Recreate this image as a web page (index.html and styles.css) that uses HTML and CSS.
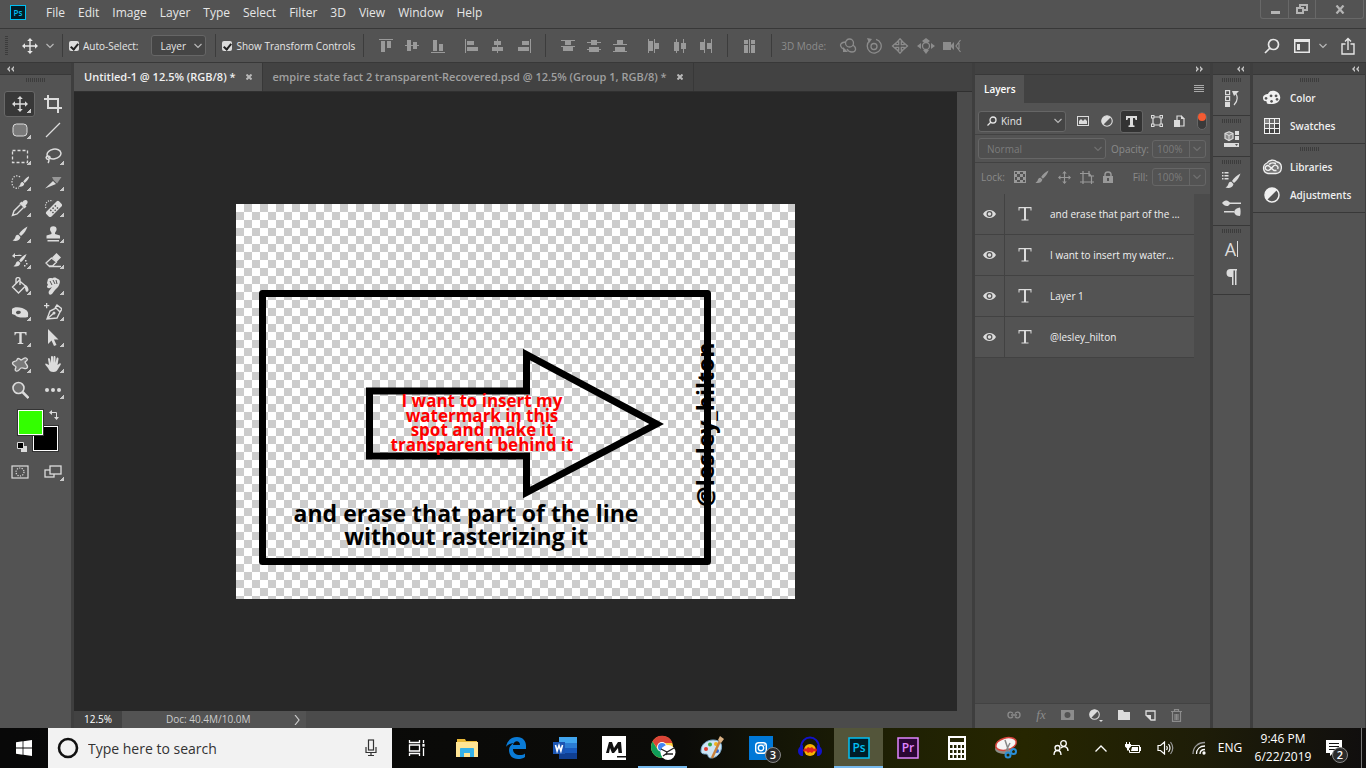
FILE: index.html
```html
<!DOCTYPE html>
<html lang="en">
<head>
<meta charset="utf-8">
<title>Untitled-1 @ 12.5% (RGB/8)</title>
<link rel="stylesheet" href="styles.css">
</head>
<body>
<svg class="defs" aria-hidden="true">
  <symbol id="chev" viewBox="0 0 8 6"><path d="M.5 1 4 4.500 7.500 1" fill="none" stroke="currentColor" stroke-width="1.200"/></symbol>
  <symbol id="left2" viewBox="0 0 8 6"><path d="M4 0 1 3l3 3V4L3 3l1-1zM8 0 5 3l3 3V4L7 3l1-1z"/></symbol>
  <symbol id="right2" viewBox="0 0 8 6"><path d="M0 0l3 3-3 3V4l1-1-1-1zM4 0l3 3-3 3V4l1-1-1-1z"/></symbol>
  <symbol id="move" viewBox="0 0 16 16"><path d="M8 0l2.800 3H8.700v4.300H13V5.200L16 8l-3 2.800V8.700H8.700V13h2.100L8 16l-2.800-3h2.100V8.700H3v2.100L0 8l3-2.800v2.100h4.300V3H5.200z"/></symbol>
  <symbol id="brush" viewBox="0 0 16 16"><path d="M15.500.5C12 2 9 5 7 8l2 2c3-2.500 5.500-6 6.500-9.500zM6.300 8.800C4 8.500 3.500 10.500 3 12c-.5 1.300-1.500 2-2.500 2.500 3 1 7.500.2 7.900-3.600z"/></symbol>
  <symbol id="tee" viewBox="0 0 14 14"><path d="M.5.500h13V4h-1c-.2-1.500-.7-2-2-2H8.300v9.500c0 .8.400 1 1.700 1v1H4v-1c1.300 0 1.700-.2 1.700-1V2H3.500c-1.300 0-1.800.5-2 2h-1z"/></symbol>
  <symbol id="teethin" viewBox="0 0 14 14"><path d="M.5 0h13v3.500h-1V1.200H8V12.500h2.500v1h-7v-1H6V1.200H1.500v2.300h-1z"/></symbol>
  <symbol id="half" viewBox="0 0 16 16"><circle cx="8" cy="8" r="7" fill="none" stroke="currentColor" stroke-width="1.500"/><path d="M13 3A7 7 0 0 0 3 13z"/></symbol>
  <symbol id="eye" viewBox="0 0 14 10"><path fill-rule="evenodd" d="M0 5C3-.8 11-.8 14 5c-3 5.800-11 5.800-14 0zm7-3.200a3.200 3.200 0 1 0 0 6.400 3.200 3.200 0 0 0 0-6.400z"/><circle cx="7" cy="5" r="1.900"/></symbol>
</svg>

<header class="menubar">
  <svg class="pslogo" viewBox="0 0 16 15"><rect x=".5" y=".5" width="15" height="14" fill="#001d28" stroke="#00c0f3"/><text x="8" y="11" text-anchor="middle">Ps</text></svg>
  <nav class="menus">
    <button>File</button><button>Edit</button><button>Image</button><button>Layer</button><button>Type</button><button>Select</button><button>Filter</button><button>3D</button><button>View</button><button>Window</button><button>Help</button>
  </nav>
  <div class="winbtns">
    <button aria-label="Minimize"><svg width="10" height="10"><path d="M1 7h9v3H1z"/></svg></button>
    <button aria-label="Restore"><svg width="12" height="10"><path fill="none" stroke="currentColor" stroke-width="2" d="M4 3V1h7v5H8M1 4h6v5H1z"/></svg></button>
    <button aria-label="Close"><svg width="10" height="9"><path fill="none" stroke="currentColor" stroke-width="2.200" d="M1.500.5l7 8M8.500.5l-7 8"/></svg></button>
  </div>
</header>

<div class="options">
  <span class="grip-v"></span>
  <button class="opt-tool" aria-label="Move tool preset"><svg width="16" height="16"><use href="#move"/></svg><svg width="8" height="6" class="soft"><use href="#chev"/></svg></button>
  <span class="sep"></span>
  <label class="check"><input type="checkbox" checked>Auto-Select:</label>
  <span class="select opt-select"><select aria-label="Auto-select target"><option>Layer</option></select><svg width="8" height="6"><use href="#chev"/></svg></span>
  <span class="sep"></span>
  <label class="check"><input type="checkbox" checked>Show Transform Controls</label>
  <span class="sep sep-wide"></span>
  <div class="align">
    <button aria-label="Align top edges"><svg viewBox="0 0 14 14"><path d="M0 0h14v1H0zM2 2h4v11H2zM8 2h4v7H8z"/></svg></button>
    <button aria-label="Align vertical centers"><svg viewBox="0 0 14 14"><path d="M0 6h14v1H0zM2 1h4v11H2zM8 3h4v7H8z"/></svg></button>
    <button aria-label="Align bottom edges"><svg viewBox="0 0 14 14"><path d="M0 13h14v1H0zM2 1h4v11H2zM8 5h4v7H8z"/></svg></button>
  </div>
  <div class="align">
    <button aria-label="Align left edges"><svg viewBox="0 0 14 14"><path d="M0 0h1v14H0zM2 2h7v4H2zM2 8h11v4H2z"/></svg></button>
    <button aria-label="Align horizontal centers"><svg viewBox="0 0 14 14"><path d="M6 0h1v14H6zM3 2h7v4H3zM1 8h11v4H1z"/></svg></button>
    <button aria-label="Align right edges"><svg viewBox="0 0 14 14"><path d="M13 0h1v14h-1zM5 2h7v4H5zM1 8h11v4H1z"/></svg></button>
  </div>
  <span class="sep"></span>
  <div class="align">
    <button aria-label="Distribute top edges"><svg viewBox="0 0 14 14"><path d="M0 1h14v1H0zM4 2h6v4H4zM0 7h14v1H0zM2 8h10v4H2z"/></svg></button>
    <button aria-label="Distribute vertical centers"><svg viewBox="0 0 14 14"><path d="M0 3h14v1H0zM4 1h6v5H4zM0 10h14v1H0zM2 8h10v5H2z"/></svg></button>
    <button aria-label="Distribute bottom edges"><svg viewBox="0 0 14 14"><path d="M0 5h14v1H0zM4 1h6v4H4zM0 12h14v1H0zM2 8h10v4H2z"/></svg></button>
  </div>
  <div class="align">
    <button aria-label="Distribute left edges"><svg viewBox="0 0 14 14"><path d="M1 0h1v14H1zM2 2h4v10H2zM7 0h1v14H7zM8 4h4v6H8z"/></svg></button>
    <button aria-label="Distribute horizontal centers"><svg viewBox="0 0 14 14"><path d="M3 0h1v14H3zM1 3h5v9H1zM10 0h1v14h-1zM8 4h5v6H8z"/></svg></button>
    <button aria-label="Distribute right edges"><svg viewBox="0 0 14 14"><path d="M5 0h1v14H5zM1 3h4v8H1zM12 0h1v14h-1zM8 4h4v6H8z"/></svg></button>
  </div>
  <span class="sep"></span>
  <div class="align single">
    <button aria-label="Auto-align layers"><svg viewBox="0 0 14 14"><path d="M1 1h4v4H1zM1 6h4v8H1zM6 0h1v14H6zM8 1h4v4H8zM8 6h4v8H8z"/></svg></button>
  </div>
  <span class="sep"></span>
  <div class="mode3d">
    <span>3D Mode:</span>
    <button aria-label="Orbit"><svg viewBox="0 0 18 16"><g fill="none" stroke="currentColor" stroke-width="1.300"><circle cx="10.500" cy="5" r="4"/><path d="M7 4C2 4 0 7 3 10l3 2M14 7c4 3 3 7-1 7-2 0-4-1-5-3"/></g><path d="M4 14V9l5 5z"/></svg></button>
    <button aria-label="Roll"><svg viewBox="0 0 18 16"><g fill="none" stroke="currentColor" stroke-width="1.300"><circle cx="9" cy="8.500" r="3"/><path d="M5 2.500a7 7 0 1 0 6-1.200"/></g><path d="M2 0l5 1-3 4z"/></svg></button>
    <button aria-label="Pan"><svg viewBox="0 0 18 16"><path fill="none" stroke="currentColor" stroke-width="1.300" d="M9 .8 12 4H10.300v2.700H13V5l3.500 3-3.500 3V9.300h-2.700V12H12l-3 3.200L6 12h1.700V9.300H5V11L1.500 8 5 5v1.700h2.700V4H6z"/></svg></button>
    <button aria-label="Slide"><svg viewBox="0 0 18 16"><circle cx="9" cy="8" r="3.500" fill="none" stroke="currentColor" stroke-width="1.300"/><path d="M5 3l4-3 4 3-2 1.500H7zM4 5v6L0 8zM14 5v6l4-3zM6 12h6l-3 4z"/></svg></button>
    <button aria-label="Camera"><svg viewBox="0 0 18 16"><path d="M0 4h8v3l3-3v8L8 9v3H0z"/><path fill="none" stroke="currentColor" stroke-width="1.200" d="M17.500 2 13 8l4.500 6M16 5v6"/></svg></button>
  </div>
  <div class="opt-right">
    <button aria-label="Search"><svg width="16" height="16" fill="none" stroke="currentColor" stroke-width="1.700"><circle cx="9.500" cy="6.500" r="5"/><path d="M6 10 1 15"/></svg></button>
    <button aria-label="Workspace"><svg width="16" height="14"><path fill-rule="evenodd" d="M0 0h16v14H0zM1.500 3v9.500h13V3z"/><path d="M3 5h3v6H3z"/></svg><svg width="8" height="6" class="soft"><use href="#chev"/></svg></button>
    <button aria-label="Share"><svg width="14" height="18" fill="none" stroke="currentColor" stroke-width="1.400"><path d="M4.500 7H1v10h12V7H9.500M7 13V1.500M4 4.500l3-3 3 3"/></svg></button>
  </div>
</div>

<main class="workspace">
  <aside class="tools">
    <div class="strip strip-left"><svg width="8" height="6"><use href="#left2"/></svg></div>
    <span class="grip"></span>
    <div class="toolgrid">
      <button class="on" aria-label="Move"><svg viewBox="0 0 18 18"><use href="#move" x="1" y="1" width="16" height="16"/></svg></button>
      <button class="plain" aria-label="Crop"><svg viewBox="0 0 18 18"><path fill="none" stroke="currentColor" stroke-width="2" d="M0 4h14v11M4 0v13h14M14 15v3"/></svg></button>
      <button aria-label="Rounded rectangle"><svg viewBox="0 0 18 18"><rect x="2" y="3" width="14" height="12" rx="3.500" fill="#7a7a7a" stroke="currentColor"/></svg></button>
      <button class="plain" aria-label="Line"><svg viewBox="0 0 18 18"><path fill="none" stroke="currentColor" stroke-width="1.200" d="M2 16 16 2"/></svg></button>
      <button aria-label="Marquee"><svg viewBox="0 0 18 18"><rect x="1.500" y="3.500" width="15" height="12" fill="none" stroke="currentColor" stroke-width="1.300" stroke-dasharray="3 2"/></svg></button>
      <button aria-label="Lasso"><svg viewBox="0 0 18 18"><g fill="none" stroke="currentColor" stroke-width="1.500"><ellipse cx="10" cy="7" rx="7" ry="4.800" transform="rotate(-10 10 7)"/><path d="M3 9c-2 2 0 4 2 3s1-3-1-3M5 12c0 2 0 3-1 4"/></g></svg></button>
      <button aria-label="Quick selection"><svg viewBox="0 0 18 18"><path fill="none" stroke="currentColor" stroke-width="1.300" stroke-dasharray="1.300 1.500" d="M9 4C5 1 1 4 1 9s3 7 7 6"/><use href="#brush" x="7" y="2" width="12" height="13"/></svg></button>
      <button aria-label="Slice"><svg viewBox="0 0 18 18"><path d="M1 15.500 9 8l3 3z"/><path d="M8 4h9.500L13 10.500 9.500 7z" opacity=".5"/></svg></button>
      <button aria-label="Eyedropper"><svg viewBox="0 0 18 18"><path d="M11 3.500c2-3 4-3 5-2s1 3-1.500 5l1 1-2 2-5-5 2-2z"/><path fill="none" stroke="currentColor" stroke-width="1.400" d="M9.500 5.500 3 12l-1.500 4.500L6 15l6.500-6.500"/></svg></button>
      <button aria-label="Healing brush"><svg viewBox="0 0 18 18"><path fill="none" stroke="currentColor" stroke-width="1.200" stroke-dasharray="1.200 1.300" d="M2 9C0 5 4 0 9 2"/><g transform="rotate(-45 10 10)"><rect x="1" y="6.500" width="18" height="7" rx="2"/><path fill="#535353" d="M6 8h1.500v1.500H6zm3.200 0h1.500v1.500H9.200zm3.200 0h1.500v1.500h-1.500zM6 11h1.500v1.500H6zm3.200 0h1.500v1.500H9.200zm3.200 0h1.500v1.500h-1.500z"/></g></svg></button>
      <button aria-label="Brush"><svg viewBox="0 0 18 18"><use href="#brush" x="1" y="1" width="16" height="16"/></svg></button>
      <button aria-label="Clone stamp"><svg viewBox="0 0 18 18"><path d="M7.500 9C8 7 6 6.500 6 4.500a3.300 3.300 0 0 1 6.600 0c0 2-2 2.500-1.600 4.500l5 1.500v3H2.500v-3zM3.500 15h11.500v1.500H3.500z"/></svg></button>
      <button aria-label="History brush"><svg viewBox="0 0 18 18"><use href="#brush" x="2" y="2" width="14" height="15"/><path d="M1 5l3-3v2c3 0 6-1 7 1H4v2zM14 9h1.500v1.500H14zm1 3h1.500v1.500H15zm-2 2h1.500v1.500H13z"/></svg></button>
      <button aria-label="Eraser"><svg viewBox="0 0 18 18"><path d="M8 6.500 12.500 2l4.500 4.500L12.500 11z"/><path fill="none" stroke="currentColor" stroke-width="1.300" d="M7.500 7 2 12l3 3h3.500l4-4zM5 15.500h12"/></svg></button>
      <button aria-label="Paint bucket"><svg viewBox="0 0 18 18"><g fill="none" stroke="currentColor" stroke-width="1.400"><path d="M8 3.500 1.500 10l6 6 7-7zM5 6V2.500C5 0 9 0 9 2.500V8"/></g><path d="M13 8c3 0 4 2 4.500 4.500 0 3-3 3-3 .5z"/></svg></button>
      <button aria-label="Smudge"><svg viewBox="0 0 18 18"><path d="M4 2c2-2 4 0 5-1 2-1 3 0 5 1 3 1 2 5 0 8l-3 3-3 4c-3 2-4-1-3-3l3-4-2 1c-3 1-4-2-2-3L3 6z"/><path stroke="#535353" d="M8 8 6 4m5 3L9 3m4 4-1-4"/></svg></button>
      <button aria-label="Sponge"><svg viewBox="0 0 18 18"><path fill-rule="evenodd" d="M1 6c2-3 11-2 14 1 3 2 2 5 2 7-4 1-11 1-13-2L1 11zm8 2C5 7 4 10 6 11c3 1 5-2 3-3z"/></svg></button>
      <button aria-label="Pen"><svg viewBox="0 0 18 18"><path fill="none" stroke="currentColor" stroke-width="1.400" d="M3 16 6 8l6-3 4 4-3 6zl7-6M11 5l2-3 5 4-2 3"/><circle cx="10" cy="10" r="1.500"/><path d="M0 2h2V0h1.300v2h2v1.300h-2v2H2v-2H0z"/></svg></button>
      <button aria-label="Type"><svg viewBox="0 0 18 18"><use href="#tee" x="3" y="2" width="13" height="14"/></svg></button>
      <button aria-label="Path selection"><svg viewBox="0 0 18 18"><path d="M4 0v15l3.500-3.500L10 17l2.500-1L10 10.500h4.500z"/></svg></button>
      <button aria-label="Custom shape"><svg viewBox="0 0 18 18"><path fill="#7a7a7a" stroke="currentColor" stroke-width="1.300" d="M6 5c0-2 2-2 4 0 2 0 3-3 5-2s2 2-1 4c1 3 4 4 2 6s-3-1-6 0c-2 1-2 4-5 3-2-1 0-3 0-4S1 10 1.500 8 5 7 6 5z"/></svg></button>
      <button aria-label="Hand"><svg viewBox="0 0 18 18"><path d="M5 10 4 4c0-1.500 1.500-1.500 2 0l1 4V2c0-1.500 2-1.500 2 0v6l.5-6c0-1.500 2-1.500 2 0v6l1-4.500c.5-1.500 2-1 2 .5l-1 6 2-1.500c1-.7 2 .3 1 1.500L14 14c-1 2-2 3-4.500 3-3 0-4-1-5.500-4L1.500 10c-.7-1.500.5-2 1.500-1z"/></svg></button>
      <button class="plain" aria-label="Zoom"><svg viewBox="0 0 18 18"><circle cx="7.500" cy="7" r="5.500" fill="#6e6e6e" stroke="currentColor" stroke-width="1.600"/><path stroke="currentColor" stroke-width="2.500" d="m11.500 11 6 6"/></svg></button>
      <button aria-label="Edit toolbar"><svg viewBox="0 0 18 18"><circle cx="3" cy="9" r="2"/><circle cx="9" cy="9" r="2"/><circle cx="15" cy="9" r="2"/></svg></button>
    </div>
    <div class="colors">
      <button class="bgc" aria-label="Background color"></button>
      <button class="fgc" aria-label="Foreground color"></button>
      <button class="swap" aria-label="Swap colors"><svg width="10" height="10"><path fill="none" stroke="currentColor" d="M2 2.500h5.500V8"/><path d="M3 0v5L0 2.500zM5 7h5l-2.500 3z"/></svg></button>
      <button class="reset" aria-label="Default colors"><svg width="10" height="10"><path d="M4 4h6v6H4z"/><path fill="#000" stroke="#ddd" d="M.5.500h6v6h-6z"/></svg></button>
    </div>
    <div class="toolgrid modes">
      <button class="plain" aria-label="Quick mask"><svg viewBox="0 0 18 18"><g fill="none" stroke="currentColor" stroke-width="1.200"><rect x="1" y="3" width="16" height="12"/><circle cx="9" cy="9" r="4" stroke-dasharray="1.200 1.300"/></g></svg></button>
      <button aria-label="Screen mode"><svg viewBox="0 0 18 18"><g fill="#535353" stroke="currentColor" stroke-width="1.300"><rect x="1" y="7" width="9" height="7"/><rect x="6" y="3" width="11" height="8"/></g></svg></button>
    </div>
  </aside>

  <section class="doc">
    <div class="tabs">
      <div class="tab on"><span>Untitled-1 @ 12.5% (RGB/8) *</span><button aria-label="Close tab"><svg width="6" height="6"><path stroke="currentColor" stroke-width="2" d="M.5.500l5 5M5.500.5l-5 5"/></svg></button></div>
      <div class="tab"><span>empire state fact 2 transparent-Recovered.psd @ 12.5% (Group 1, RGB/8) *</span><button aria-label="Close tab"><svg width="6" height="6"><path stroke="currentColor" stroke-width="2" d="M.5.500l5 5M5.500.5l-5 5"/></svg></button></div>
    </div>
    <div class="stage">
      <div class="pasteboard">
        <svg class="art" viewBox="0 0 559 395" width="559" height="395">
          <defs><pattern id="chk" width="16" height="16" patternUnits="userSpaceOnUse"><path fill="#fff" d="M0 0h16v16H0z"/><path fill="#ccc" d="M8 0h8v8H8zM0 8h8v8H0z"/></pattern></defs>
          <rect width="559" height="395" fill="url(#chk)"/>
          <rect x="26.500" y="89.500" width="445" height="268" fill="none" stroke="#000" stroke-width="7" stroke-linejoin="round"/>
          <path d="M133.500 187h157v-36.500l130 69.500-130 68.500V252h-157z" fill="none" stroke="#000" stroke-width="7"/>
          <g class="red" text-anchor="middle">
            <text x="246" y="203">I want to insert my</text>
            <text x="246" y="218">watermark in this</text>
            <text x="246" y="232">spot and make it</text>
            <text x="246" y="247">transparent behind it</text>
          </g>
          <g class="black" text-anchor="middle">
            <text x="230" y="318">and erase that part of the line</text>
            <text x="230" y="341">without rasterizing it</text>
          </g>
          <text class="mark" transform="translate(478 303) rotate(-90)">@lesley_hilton</text>
        </svg>
      </div>
      <div class="scroll"></div>
    </div>
    <div class="status"><span class="zoom">12.5%</span><span class="size"><span>Doc: 40.4M/10.0M</span><svg width="6" height="10"><path fill="none" stroke="currentColor" stroke-width="1.200" d="m1 0 4 5-4 5"/></svg></span></div>
  </section>

  <aside class="layers">
    <div class="strip"><svg width="8" height="6"><use href="#right2"/></svg></div>
    <div class="paneltabs"><h2>Layers</h2><button aria-label="Panel menu"><svg width="10" height="8"><path d="M0 0h10v1H0zm0 2h10v1H0zm0 2h10v1H0zm0 2h10v1H0z"/></svg></button></div>
    <div class="filter">
      <span class="select kind"><svg class="mag" width="10" height="10" fill="none" stroke="currentColor" stroke-width="1.300"><circle cx="6" cy="4" r="3"/><path d="M4 6 .5 9.500"/></svg><select aria-label="Filter kind"><option>Kind</option></select><svg width="8" height="6"><use href="#chev"/></svg></span>
      <div class="filters">
        <button aria-label="Pixel layers"><svg width="12" height="10"><path fill-rule="evenodd" d="M0 0h12v10H0zM1 1v8h10V1z"/><path d="M2 8V5l2-2 2 2 2-2 2 2v3z"/></svg></button>
        <button aria-label="Adjustment layers"><svg width="12" height="12"><use href="#half"/></svg></button>
        <button class="on" aria-label="Type layers"><svg width="11" height="11"><path d="M0 0h11v4h-1.500C9.300 2.500 9 2 8 2H7v6c0 1 .3 1.500 1.500 1.500V11h-6V9.500C3.700 9.500 4 9 4 8V2H3c-1 0-1.300.5-1.500 2H0z"/></svg></button>
        <button aria-label="Shape layers"><svg width="12" height="12"><path fill="none" stroke="currentColor" stroke-width="1.200" d="M2 2h8v8H2z"/><path d="M0 0h3.500v3.500H0zm8.500 0H12v3.500H8.500zM0 8.500h3.500V12H0zm8.500 0H12V12H8.500z"/><path fill="#535353" d="M1 1h1.500v1.500H1zm8.500 0H11v1.500H9.500zM1 9.500h1.500V11H1zm8.500 0H11V11H9.500z"/></svg></button>
        <button aria-label="Smart objects"><svg width="11" height="12"><path fill="none" stroke="currentColor" stroke-width="1.200" d="M3 5V1h4l3 3v7H6"/><path d="M0 5h6v7H0zM7 0v4h4z"/></svg></button>
        <button class="toggle" aria-label="Layer filtering on or off"><i></i></button>
      </div>
    </div>
    <div class="blend">
      <span class="select"><select aria-label="Blend mode" disabled><option>Normal</option></select><svg width="8" height="6"><use href="#chev"/></svg></span>
      <label for="opacity">Opacity:</label><span class="num"><input id="opacity" value="100%" disabled><svg width="8" height="6"><use href="#chev"/></svg></span>
    </div>
    <div class="lock">
      <span>Lock:</span>
      <button aria-label="Lock transparent pixels"><svg width="12" height="12"><path d="M0 0h12v1H0zM0 11h12v1H0zM0 1h1v10H0zM11 1h1v10h-1zM3 1h3v2H3zM9 1h2v2H9zM1 3h2v3H1zM6 3h3v3H6zM3 6h3v3H3zM9 6h2v3H9zM1 9h2v2H1zM6 9h3v2H6z"/></svg></button>
      <button aria-label="Lock image pixels"><svg width="14" height="14"><use href="#brush"/></svg></button>
      <button aria-label="Lock position"><svg width="13" height="13"><use href="#move"/></svg></button>
      <button aria-label="Lock artboard nesting"><svg width="14" height="13"><path fill="none" stroke="currentColor" stroke-width="1.200" d="M3 0v13M0 2.500h9M11.500 5v8M0 11h14M9 2.500l2.500 3M9 0v5h5"/></svg></button>
      <button aria-label="Lock all"><svg width="10" height="12"><path fill-rule="evenodd" d="M0 5h10v7H0zm4 2v3h2V7z"/><path fill="none" stroke="currentColor" stroke-width="1.500" d="M2 6V3.500C2 0 8 0 8 3.500V6"/></svg></button>
      <label for="fill">Fill:</label><span class="num"><input id="fill" value="100%" disabled><svg width="8" height="6"><use href="#chev"/></svg></span>
    </div>
    <div class="listwrap">
      <ul class="list">
        <li><button class="vis" aria-label="Toggle visibility"><svg width="13" height="10"><use href="#eye"/></svg></button><svg class="thumb" width="14" height="14"><use href="#teethin"/></svg><span>and erase that part of the ...</span></li>
        <li><button class="vis" aria-label="Toggle visibility"><svg width="13" height="10"><use href="#eye"/></svg></button><svg class="thumb" width="14" height="14"><use href="#teethin"/></svg><span>I want to insert my water...</span></li>
        <li><button class="vis" aria-label="Toggle visibility"><svg width="13" height="10"><use href="#eye"/></svg></button><svg class="thumb" width="14" height="14"><use href="#teethin"/></svg><span>Layer 1</span></li>
        <li><button class="vis" aria-label="Toggle visibility"><svg width="13" height="10"><use href="#eye"/></svg></button><svg class="thumb" width="14" height="14"><use href="#teethin"/></svg><span>@lesley_hilton</span></li>
      </ul>
    </div>
    <div class="foot">
      <button class="dim" aria-label="Link layers"><svg width="14" height="8" fill="none" stroke="currentColor" stroke-width="1.300"><path d="M6 2.500C4.500.5 1 .5 1 4s3.500 3.500 5 1.500M8 2.500C9.500.5 13 .5 13 4S9.500 7.500 8 5.500M4 4h6"/></svg></button>
      <button class="dim fx" aria-label="Layer style">fx</button>
      <button class="dim" aria-label="Add mask"><svg width="13" height="10"><path fill-rule="evenodd" d="M0 0h13v10H0zm6.500 2a3 3 0 1 0 0 6 3 3 0 0 0 0-6z"/></svg></button>
      <button aria-label="New adjustment layer"><svg width="14" height="14"><use href="#half" width="11" height="11" y="1"/><path d="M10 12h4l-2 2z"/></svg></button>
      <button aria-label="New group"><svg width="12" height="10"><path d="M0 0h5l1 2h6v8H0z"/></svg></button>
      <button aria-label="New layer"><svg width="11" height="11"><path fill="none" stroke="currentColor" stroke-width="1.300" d="M1 5V1h9v9H6"/><path d="M0 5h6v6z"/></svg></button>
      <button class="dim" aria-label="Delete layer"><svg width="11" height="13" fill="none" stroke="currentColor" stroke-width="1.200"><path d="M0 2.500h11M3.500 2V.6h4V2M1.500 3v9.400h8V3M4 5v6m1.500-6v6M7 5v6"/></svg></button>
    </div>
  </aside>

  <aside class="dock narrow">
    <div class="strip"><svg width="8" height="6"><use href="#left2"/></svg></div>
    <div class="group"><span class="grip"></span>
      <button aria-label="History"><svg width="16" height="18"><path fill="none" stroke="currentColor" stroke-width="1.200" d="M1.600 1.600h4v4h-4zm0 6h4v4h-4zM10 16c4-4 4-8 1.500-12"/><path d="M1 13h5v5H1zM8 2h7l-5 5z"/></svg></button></div>
    <div class="group"><span class="grip"></span>
      <button aria-label="Properties"><svg width="16" height="16"><path fill="#8a8a8a" stroke="currentColor" stroke-width="1.200" d="M5 .8 9 2.500v5L5 9.500 1 7.500v-5z"/><path fill="none" stroke="currentColor" d="m1 2.500 4 2 4-2M5 4.500v5"/><path d="M11 0h4v4h-4zm0 5h4v4h-4zM0 12h15v4H0z"/><path fill="#535353" d="M11 13h3l-1.500 2z"/></svg></button></div>
    <div class="group"><span class="grip"></span>
      <button aria-label="Brush presets"><svg width="20" height="18"><path d="M0 1h1.500v1.500H0zm2.500 0h4v1.500h-4zM0 4h1.500v1.500H0zm2.500 0h4v1.500h-4zM0 7h1.500v1.500H0zm2.500 0h4v1.500h-4z"/><use href="#brush" x="3" y="2" width="16" height="16"/></svg></button>
      <button aria-label="Brush settings"><svg width="20" height="16"><path d="M0 3c2-2 3-3 6-2l2 1.500h11v1.500H8L6 6C3 6.500 2 5 0 3zM2 11h10v1.500H2zM12 12c1-3 3-4 6-4.500.7 2 1 6 0 8.500-3 0-5-1-6-4z"/></svg></button></div>
    <div class="group"><span class="grip"></span>
      <button class="char" aria-label="Character"><span>A</span><i></i></button>
      <button aria-label="Paragraph"><svg width="12" height="16"><path d="M11 0H4.500a4 4 0 0 0 0 8H6v8h1.500V1.500H9V16h1.500V1.500h.5z"/></svg></button></div>
  </aside>

  <aside class="dock wide">
    <div class="strip"><svg width="8" height="6"><use href="#left2"/></svg></div>
    <div class="group"><span class="grip"></span>
      <button><svg width="20" height="16"><path fill-rule="evenodd" d="M1 8c0-3 3-4 5-4 1-3 4-4 7-3 4 1 6 5 5 8s-4 5-9 5c-4 0-5-1-4-2 0-1-4 0-4-4zm3-1a1.400 1.400 0 1 0 .1 0zm5-2.500a1.400 1.400 0 1 0 .1 0zm5 0a1.400 1.400 0 1 0 .1 0zM15 8a1.400 1.400 0 1 0 .1 0zm-5.500 2a1.400 1.400 0 1 0 .1 0z"/></svg>Color</button>
      <button><svg width="20" height="16"><path d="M2 0h16v16H2z"/><path fill="#888" d="M3 1h4v4H3z"/><path fill="#666" d="M8 1h4v4H8zM13 1h4v4h-4zM3 6h4v4H3zm5 0h4v4H8z"/><path fill="#444" d="M13 6h4v4h-4zM3 11h4v4H3zm5 0h4v4H8zm5 0h4v4h-4z"/></svg>Swatches</button></div>
    <div class="group"><span class="grip"></span>
      <button><svg width="20" height="16"><path fill="#777" stroke="currentColor" stroke-width="1.300" d="M6 14.500A5.500 5.500 0 0 1 5 4c2-3 7-4 10-1 6 1 6 11-1 11.500z"/><path fill="none" stroke="currentColor" stroke-width="1.400" d="M14.500 11.500H12L7.500 7.500C5 5 2 8.500 4 10.500c2 2 4 .5 7-3s6 .5 4.500 2.500M7 5.500c3-3 6-1 7-1"/></svg>Libraries</button>
      <button><svg width="20" height="16"><use href="#half" x="2" width="16" height="16"/></svg>Adjustments</button></div>
  </aside>
</main>

<footer class="taskbar">
  <button class="start" aria-label="Start"><svg width="16" height="16"><path fill="#fff" d="M0 2.200 6.600 1.300v6.300H0zM7.400 1.200 16 0v7.600H7.400zM0 8.400h6.600v6.300L0 13.800zM7.400 8.400H16V16l-8.600-1.200z"/></svg></button>
  <label class="search"><svg width="22" height="22"><circle cx="11" cy="11" r="9" fill="none" stroke="#111" stroke-width="2.600"/></svg><input type="text" placeholder="Type here to search" aria-label="Type here to search"><svg width="12" height="18" fill="none" stroke="#333" stroke-width="1.200"><rect x="3.500" y="1" width="5" height="10"/><path d="M1 8v5.500h10V8M6 13.500v3M3 16.500h6"/></svg></label>
  <button class="taskview" aria-label="Task view"><svg width="18" height="16" fill="none" stroke="#fff" stroke-width="1.300"><path d="M1.500 0v2.500h10V0M1.500 5h10v6h-10zM1.500 16v-2.500h10V16M15.500 0v3M15.500 8v8"/><path fill="#fff" d="M15 4.500h1v1.500h-1z"/></svg></button>
  <div class="apps">
    <button aria-label="File Explorer"><svg width="22" height="20"><path fill="#e8b838" d="M1 1h8l1 2h11v3H1z"/><path fill="#ffe594" d="M0 4h22v15H0z"/><path fill="#34b1e8" d="M4 19v-8c0-1 .5-1 1-1h12c.5 0 1 0 1 1v8h-4v-4H8v4z"/></svg></button>
    <button aria-label="Edge"><svg width="22" height="22"><path fill="#0a7bd6" d="M1 10C2 3 7 0 12 0c6 0 9 4 9 9v3H8c0 4 3 6 7 6 2 0 4-.5 5-1.500V20c-2 1.500-4 2-7 2-6 0-9-4-9-9 0-3 2-5.500 5-7-4 .5-6.500 2-8 4zm7-2h7c0-5-6-5-7 0z"/></svg></button>
    <button aria-label="Word"><svg width="24" height="22"><path fill="#2b7cd3" d="M6 0h18v22H6z"/><path fill="#41a5ee" d="M6 0h18v6H6z"/><path fill="#185abd" d="M6 11h18v6H6z"/><path fill="#103f91" d="M6 16h18v6H6z"/><path fill="#1c56b4" d="M0 5h12v12H0z"/><path fill="none" stroke="#fff" stroke-width="1.600" d="m2.500 8 1.600 6L6 8.500 7.900 14l1.600-6"/></svg></button>
    <button aria-label="M app"><svg width="24" height="24"><path fill="#fff" d="M0 0h24v24H0z"/><path fill="#111" d="M4 17 7 6h3l2 6 4-6h3l1 11h-3.500l-.5-5-4 5h-2l-2-5-1 5zM15 20h9v1.500h-9z"/></svg></button>
    <button class="run" aria-label="Chrome"><svg width="26" height="26"><circle cx="12" cy="12" r="11" fill="#ffcd40"/><path fill="#db4437" d="M2.500 6.500a11 11 0 0 1 20 1.500H12L8 14z"/><path fill="#0f9d58" d="M2.500 6.500A11 11 0 0 0 12 23l4-8H8z"/><circle cx="12" cy="12" r="5" fill="#fff"/><circle cx="12" cy="12" r="4" fill="#4285f4"/><circle cx="18" cy="17.500" r="7.500" fill="#fff"/><path fill="none" stroke="#222" stroke-width="1.300" d="m11 14 6 3 7-4M13 21l3-2h7M17 17l-1 3"/></svg></button>
    <button aria-label="Paint"><svg width="24" height="24"><path fill="#cde5f5" stroke="#79a9cc" d="M1 15C1 8 7 4 13 4c7 0 10 4 8 10-1 4-5 8-10 8-4 0-2-4-5-4-2 0-5 0-5-3z"/><circle cx="6" cy="13" r="2" fill="#e23b2e"/><circle cx="10" cy="8.500" r="2" fill="#39a845"/><circle cx="16" cy="8" r="2" fill="#f2b31b"/><circle cx="17" cy="15" r="2" fill="#3565c8"/><path stroke="#c8813c" stroke-width="2.500" d="M12 22 20 5"/><path fill="#dbb285" d="m18 4 2-4 4 3-3 4z"/></svg></button>
    <button class="insta" aria-label="Instagram"><svg width="24" height="24"><path fill="#0078d7" d="M0 0h24v24H0z"/><g fill="none" stroke="#fff" stroke-width="1.400"><rect x="6.700" y="6.700" width="10.600" height="10.600" rx="3"/><circle cx="12" cy="12" r="2.700"/></g><circle cx="15.200" cy="9" r=".8" fill="#fff"/></svg><b class="badge">3</b></button>
    <button aria-label="Audacity"><svg width="24" height="24"><ellipse cx="12" cy="14" rx="6" ry="6" fill="#f5b400"/><path fill="#e02020" d="M5 14l2-2 1 1 2-2 2 1 2-1 2 2 2-1 1 2-1 2-2-1-2 2-2-1-2 1-2-2-2 1z"/><path fill="none" stroke="#1212c8" stroke-width="2" d="M3 12C3-2 21-2 21 12"/><path fill="#1212c8" d="M5 9v11H3c-4-2-4-8 0-10zM19 9v11h2c4-2 4-8 0-10z"/></svg></button>
    <button class="run active" aria-label="Photoshop"><svg class="ps" width="22" height="22"><rect x="1" y="1" width="20" height="20" fill="#001d28" stroke="#00c0f3" stroke-width="1.500"/><text x="11" y="15" text-anchor="middle">Ps</text></svg></button>
    <button aria-label="Premiere"><svg class="pr" width="22" height="22"><rect x="1" y="1" width="20" height="20" fill="#2a0634" stroke="#e085ff" stroke-width="1.500"/><text x="11" y="15" text-anchor="middle">Pr</text></svg></button>
    <button aria-label="Calculator"><svg width="18" height="24"><path fill="#fff" fill-rule="evenodd" d="M0 0h18v24H0zm2 2v4h14V2zm0 7v3h2.500V9zm4 0v3h2.500V9zm4 0v3h2.500V9zm4 0v3h2V9zM2 14v3h2.500v-3zm4 0v3h2.500v-3zm4 0v3h2.500v-3zm4 0v3h2v-3zM2 19v3h2.500v-3zm4 0v3h2.500v-3zm4 0v3h2.500v-3zm4 0v3h2v-3z"/></svg></button>
    <button aria-label="Snipping Tool"><svg width="24" height="24"><ellipse cx="10" cy="13" rx="9" ry="5" fill="#8d8d88"/><ellipse cx="12" cy="8" rx="10.500" ry="6" transform="rotate(-15 12 8)" fill="#f5f5f5" stroke="#d8453e" stroke-width="1.500"/><path fill="none" stroke="#888" stroke-width="1.500" d="m11 4 4 12M16 7l-4 8"/><g fill="none" stroke="#2a8fd8" stroke-width="2"><circle cx="14" cy="19" r="2.500"/><circle cx="19.500" cy="15.500" r="2.500"/></g></svg></button>
  </div>
  <div class="tray">
    <button class="people" aria-label="People"><svg width="16" height="16" fill="none" stroke="#fff" stroke-width="1.300"><circle cx="10.500" cy="3.500" r="2.800"/><circle cx="4.500" cy="8" r="2.500"/><path d="M1 15c0-6 7-6 7 0M8 8c3-3 7-1 7 3"/></svg></button>
    <button class="up" aria-label="Hidden icons"><svg width="12" height="7"><path fill="none" stroke="#fff" stroke-width="1.300" d="m.5 6.500 5.500-5.500 5.500 5.500"/></svg></button>
    <button class="bat" aria-label="Battery"><svg width="16" height="12"><path fill="none" stroke="#fff" d="M5 3.500h9.500v7h-10V8"/><path fill="#fff" d="M7 5h6v4H6zM15 5h1v4h-1zM1 0h1v2H1zm3 0h1v2H4zM0 2h6v2.500L4 6.500v2H2v-2L0 4.500z"/></svg></button>
    <button class="vol" aria-label="Volume"><svg width="17" height="14" fill="none" stroke="#fff" stroke-width="1.200"><path d="M1 4.500h2.500l4-3.500v12l-4-3.500H1zM9.500 5q1.500 2 0 4M11.500 3q3 4 0 8"/><path stroke="#999" d="M13.500 1q4.500 6 0 12"/></svg></button>
    <button class="wifi" aria-label="Wi-Fi"><svg width="14" height="14" fill="none" stroke="#fff" stroke-width="1.300"><path stroke="#999" d="M1 13C1 6 6 1.500 13 1.500"/><path d="M4.500 13C4.500 8 8 5 13 5M8 13c0-3 2-4.500 5-4.500"/><circle cx="12" cy="12" r="1" fill="#fff"/></svg></button>
    <button class="lang">ENG</button>
    <button class="clock"><span>9:46 PM</span><span>6/22/2019</span></button>
    <button class="notif" aria-label="Notifications"><svg width="16" height="16"><path fill="#fff" d="M0 0h16v13H7l-3 3v-3H0z"/><path stroke="#111" d="M3 3.500h10M3 6.500h10M3 9.500h7"/></svg><b class="badge">2</b></button>
    <button class="desk" aria-label="Show desktop"></button>
  </div>
</footer>
</body>
</html>
```
FILE: styles.css
```css
* { box-sizing: border-box; }
body {
  margin: 0;
  min-height: 100vh;
  display: flex;
  flex-direction: column;
  background: #535353;
  color: #e6e6e6;
  font: 10px/14px "Open Sans", "Noto Sans", sans-serif;
}
button, input, select {
  font: inherit;
  color: inherit;
  background: none;
  border: 0;
  margin: 0;
  padding: 0;
}
button { display: flex; align-items: center; justify-content: center; }
svg { fill: currentColor; flex: none; display: block; }
svg[fill="none"] { fill: none; }
.defs { display: none; }
.soft { color: #b8b8b8; }

/* menu bar */
.menubar { display: flex; height: 29px; border-bottom: 1px solid #383838; padding-left: 10px; }
.pslogo { width: 16px; height: 15px; margin-top: 5px; }
.pslogo text { font-size: 8px; font-weight: 600; fill: #00c0f3; }
.menus { display: flex; gap: 13px; margin-left: 20px; height: 26px; font-size: 12px; }
.winbtns {
  margin-left: auto;
  margin-right: 2px;
  display: flex;
  height: 19px;
  border: 1px solid #686868;
  border-top: 0;
  border-radius: 0 0 3px 3px;
  color: #b4b4b4;
}
.winbtns button { width: 27px; }
.winbtns button + button { border-left: 1px solid #686868; }
.winbtns button:last-child { width: 48px; }

/* tool options */
.options { display: flex; align-items: center; height: 34px; padding: 0 11px 0 5px; border-bottom: 1px solid #383838; }
.grip-v { width: 3px; height: 20px; background: repeating-linear-gradient(#3c3c3c 0 1px, #535353 1px 2px); }
.opt-tool { gap: 8px; margin: 0 8px 0 14px; }
.sep { width: 1px; height: 23px; background: #3c3c3c; }
.sep-wide { margin-left: 8px; }
.check { display: flex; align-items: center; gap: 4px; margin-left: 6px; white-space: nowrap; }
.check input {
  appearance: none;
  width: 10px;
  height: 10px;
  border-radius: 2px;
  background: #dcdcdc;
  display: grid;
  place-items: center;
}
.check input:checked::after {
  content: "";
  width: 3px;
  height: 6px;
  border: solid #222;
  border-width: 0 2px 2px 0;
  transform: rotate(40deg);
}
.select {
  display: grid;
  grid-template-columns: auto 1fr 8px;
  align-items: center;
  padding-right: 3px;
  border: 1px solid #666;
  border-radius: 3px;
  background: #454545;
  height: 21px;
}
.select select { appearance: none; grid-column: 2; width: 100%; outline: 0; }
.select svg:last-child { color: #b8b8b8; }
.opt-select { width: 55px; margin: 0 9px 0 13px; padding-left: 8px; }
.align { display: flex; gap: 12px; margin-left: 15px; color: #9a9a9a; }
.align svg { width: 14px; height: 14px; }
.align + .align { margin-left: 20px; }
.align + .sep { margin-left: 14px; }
.mode3d { display: flex; align-items: center; gap: 8px; margin-left: 9px; color: #8c8c8c; }
.mode3d span { margin-right: 5px; }
.mode3d svg { width: 18px; height: 16px; }
.opt-right { display: flex; align-items: center; gap: 14px; margin-left: auto; }
.opt-right button { gap: 9px; }

/* workspace */
.workspace { flex: 1; display: flex; gap: 3px; background: #3e3e3e; padding-right: 1px; }
.strip {
  display: flex;
  align-items: center;
  justify-content: flex-end;
  height: 12px;
  padding: 0 6px;
  background: #424242;
  border-bottom: 1px solid #383838;
  color: #c8c8c8;
}
.strip-left { justify-content: flex-start; }
.grip { display: block; width: 19px; height: 4px; background: repeating-linear-gradient(90deg, #3c3c3c 0 1px, #535353 1px 2px); }

.tools { width: 71px; background: #535353; }
.tools .grip { margin: 3px auto 9px; }
.toolgrid { display: grid; grid-template-columns: 31px 31px; grid-auto-rows: 26px; column-gap: 2px; padding-left: 4px; color: #dcdcdc; }
.toolgrid button { position: relative; border: 1px solid transparent; border-radius: 3px; }
.toolgrid button.on { background: #383838; border-color: #686868; }
.toolgrid svg { width: 18px; height: 18px; }
.toolgrid button:not(.plain)::after {
  content: "";
  position: absolute;
  right: 3px;
  bottom: 3px;
  width: 4px;
  height: 4px;
  background: linear-gradient(135deg, transparent 50%, #c8c8c8 50%);
}
.colors { position: relative; height: 42px; margin: 7px 0; }
.colors button { position: absolute; color: #dcdcdc; }
.fgc, .bgc { width: 25px; height: 25px; border: 1px solid #fff; outline: 1px solid #333; }
.colors .fgc { left: 18px; top: 0; background: #3f0; }
.colors .bgc { left: 33px; top: 16px; background: #000; }
.colors .swap { left: 49px; top: 0; }
.colors .reset { left: 17px; top: 32px; }

.doc { flex: 1; min-width: 0; display: flex; flex-direction: column; }
.tabs { display: flex; height: 29px; background: #424242; border-bottom: 1px solid #303030; font-size: 11px; }
.tab { display: flex; align-items: center; gap: 10px; padding: 0 10px; border-right: 1px solid #383838; color: #a0a0a0; font-weight: 600; white-space: nowrap; }
.tab.on { background: #535353; color: #f0f0f0; }
.tab button { color: #b8b8b8; }
.stage { flex: 1; display: flex; background: #282828; }
.pasteboard { flex: 1; display: flex; align-items: center; justify-content: center; }
.scroll { width: 15px; background: #4b4b4b; }
.art .red { fill: #f00; font-size: 17px; font-weight: 700; }
.art .black { font-size: 23px; font-weight: 700; fill: #000; }
.art .mark { font-size: 23px; font-weight: 700; fill: #000; }
.status { display: flex; height: 17px; background: #4b4b4b; line-height: 17px; }
.zoom { width: 48px; padding-left: 10px; background: #424242; color: #fff; }
.size { display: flex; align-items: center; justify-content: space-between; width: 184px; padding: 0 6px 0 44px; background: #535353; color: #ccc; }

/* layers panel */
.layers { width: 235px; display: flex; flex-direction: column; background: #535353; }
.paneltabs { display: flex; justify-content: space-between; height: 28px; padding-right: 6px; background: #424242; }
.paneltabs h2 { margin: 0; padding: 0 8px 0 9px; font-size: 10px; font-weight: 600; line-height: 28px; background: #535353; color: #fff; }
.paneltabs button { color: #aaa; }
.filter { display: flex; align-items: center; height: 32px; padding: 5px 3px 0; border-bottom: 1px solid #424242; }
.kind { width: 88px; height: 21px; }
.kind .mag { margin: 0 4px 0 8px; }
.filters { flex: 1; display: flex; align-items: center; justify-content: space-between; padding-left: 11px; color: #dcdcdc; }
.filters .on { width: 23px; height: 23px; background: #333; border: 1px solid #666; border-radius: 3px; margin: 0 -4px; }
.toggle { width: 10px; height: 18px; border: 1px solid #666; border-radius: 5px; background: #3a3a3a; align-items: flex-start; }
.toggle i { width: 8px; height: 8px; border-radius: 50%; background: #f45b32; }
.blend, .lock { display: flex; align-items: center; height: 28px; padding: 0 4px 0 3px; color: #7c7c7c; }
.blend { border-bottom: 1px solid #424242; }
.blend label { color: #8a8a8a; }
.blend .select { width: 128px; padding-left: 8px; background: #4f4f4f; margin-right: auto; }
.blend .select select:disabled { opacity: 1; }
.num { display: flex; align-items: center; justify-content: space-between; width: 54px; height: 18px; margin-left: 3px; padding-right: 4px; border: 1px solid #666; border-radius: 3px; }
.num input { width: 37px; height: 16px; padding-left: 4px; border-right: 1px solid #666; }
.num svg, .blend .select svg { color: #707070; }
.lock { height: 31px; padding-bottom: 3px; gap: 9px; color: #999; }
.lock > span:first-child { margin-left: 3px; color: #8a8a8a; }
.lock label { margin-left: auto; color: #8a8a8a; }
.lock .num { margin-left: -5px; color: #7c7c7c; }
.listwrap { flex: 1; padding-right: 16px; background: #4b4b4b; }
.list { margin: 0; padding: 0; list-style: none; }
.list li { display: flex; align-items: center; height: 41px; background: #535353; border-bottom: 1px solid #424242; color: #f0f0f0; }
.vis { width: 30px; height: 40px; border-right: 1px solid #424242; color: #dcdcdc; }
.thumb { margin: 0 18px 0 13px; color: #dcdcdc; }
.foot { display: flex; align-items: center; justify-content: center; gap: 15px; height: 25px; padding: 0 0 2px 4px; border-top: 1px solid #424242; color: #dcdcdc; }
.foot .dim { color: #8c8c8c; }
.foot .fx { font: italic 13px "Liberation Serif", serif; }

/* collapsed docks */
.dock { background: #535353; color: #dcdcdc; }
.narrow { width: 37px; }
.wide { width: 112px; }
.dock .group { padding: 3px 0; border-bottom: 1px solid #383838; }
.dock .grip { margin: 0 auto 2px; }
.dock .group button { width: 100%; height: 28px; }
.char { gap: 1px; font: 18px/20px "Open Sans", sans-serif; }
.char i { width: 1px; height: 16px; background: #dcdcdc; }
.wide .group button { justify-content: flex-start; gap: 8px; padding-left: 9px; font-weight: 600; color: #f0f0f0; }

/* taskbar */
.taskbar {
  display: flex;
  height: 40px;
  background: linear-gradient(90deg, #080808 0, #0b0b08 50%, #1e2004 65%, #262600 75%, #1e1d08 88%, #100e0e);
  color: #fff;
  font-size: 12px;
}
.start { width: 48px; }
.search { display: flex; align-items: center; width: 344px; padding: 0 15px 0 9px; background: #f2f2f2; }
.search input { flex: 1; margin-left: 9px; color: #333; font-size: 14px; outline: 0; }
.search input::placeholder { color: #333; opacity: 1; }
.taskview { width: 50px; }
.apps { display: flex; }
.apps button { width: 49px; position: relative; }
.apps .run { border-bottom: 2px solid #76b9ed; padding-top: 2px; }
.apps .active { background: #53553a; }
.ps text, .pr text { font-size: 12px; font-weight: 600; fill: #00c0f3; }
.pr text { fill: #e085ff; }
.badge {
  position: absolute;
  width: 16px;
  height: 16px;
  border: 1px solid #888;
  border-radius: 50%;
  background: #2b2b2b;
  font: 600 11px/14px "Open Sans", sans-serif;
  text-align: center;
}
.insta .badge { right: 4px; bottom: 5px; }
.tray { display: flex; margin-left: auto; }
.people { width: 48px; }
.up, .lang { width: 32px; }
.bat, .wifi { width: 31px; }
.vol { width: 35px; }
.clock { width: 74px; flex-direction: column; line-height: 18px; font-size: 12px; }
.notif { width: 41px; position: relative; padding-right: 14px; }
.notif .badge { right: 13px; bottom: 5px; }
.desk { width: 5px; border-left: 1px solid #777; }
```
